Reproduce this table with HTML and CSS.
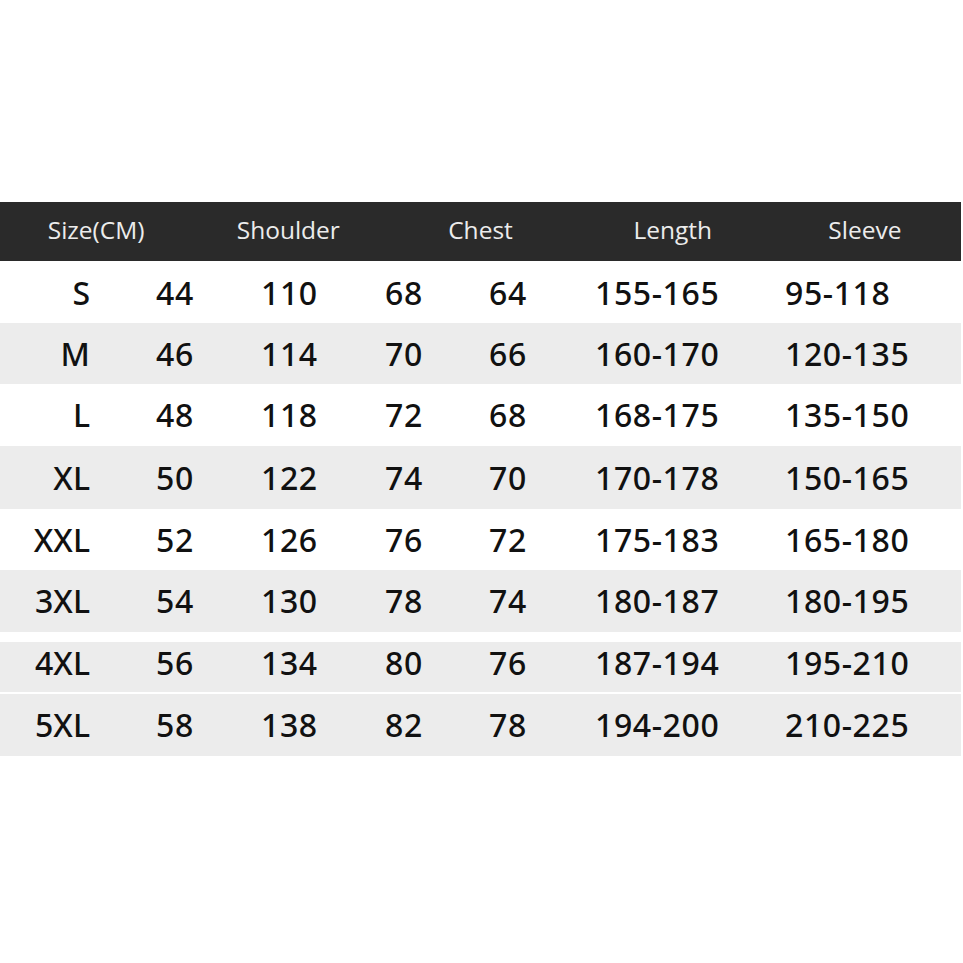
FILE: index.html
```html
<!DOCTYPE html>
<html>
<head>
<meta charset="utf-8">
<link rel="stylesheet" href="styles.css">
</head>
<body>
<div class="chart">
  <div class="head">
    <div>Size(CM)</div>
    <div>Shoulder</div>
    <div>Chest</div>
    <div>Length</div>
    <div>Sleeve</div>
  </div>
  <div class="row r1"><span class="sz">S</span><span>44</span><span>110</span><span>68</span><span>64</span><span>155-165</span><span>95-118</span></div>
  <div class="row r2 grey"><span class="sz">M</span><span>46</span><span>114</span><span>70</span><span>66</span><span>160-170</span><span>120-135</span></div>
  <div class="row r3"><span class="sz">L</span><span>48</span><span>118</span><span>72</span><span>68</span><span>168-175</span><span>135-150</span></div>
  <div class="row r4 grey"><span class="sz">XL</span><span>50</span><span>122</span><span>74</span><span>70</span><span>170-178</span><span>150-165</span></div>
  <div class="row r5"><span class="sz">XXL</span><span>52</span><span>126</span><span>76</span><span>72</span><span>175-183</span><span>165-180</span></div>
  <div class="row r6 grey"><span class="sz">3XL</span><span>54</span><span>130</span><span>78</span><span>74</span><span>180-187</span><span>180-195</span></div>
  <div class="row r7 split"><span class="sz">4XL</span><span>56</span><span>134</span><span>80</span><span>76</span><span>187-194</span><span>195-210</span></div>
  <div class="row r8 grey"><span class="sz">5XL</span><span>58</span><span>138</span><span>82</span><span>78</span><span>194-200</span><span>210-225</span></div>
</div>
</body>
</html>
```

FILE: styles.css
```css
html, body {
  margin: 0;
  padding: 0;
  background: #ffffff;
}

.chart {
  width: 961px;
  padding-top: 202px;
}

.head {
  display: grid;
  grid-template-columns: repeat(5, 1fr);
  height: 59px;
  align-items: center;
  background: #2a2a2a;
  color: #ececec;
  font-family: "Open Sans", "Noto Sans", sans-serif;
  font-size: 24.5px;
  font-weight: 500;
  text-align: center;
  margin-bottom: 1px;
}

.head div {
  line-height: 1;
  padding-bottom: 2px;
}

.row {
  display: grid;
  grid-template-columns: 156px 105px 124px 104px 106px 190px 1fr;
  align-items: center;
  height: 62px;
  font-family: "Noto Sans", "Open Sans", sans-serif;
  font-size: 32px;
  font-weight: 500;
  letter-spacing: 0.6px;
  color: #111111;
  background: #ffffff;
  box-sizing: border-box;
}

.row span {
  line-height: 1;
}

.row .sz {
  text-align: right;
  padding-right: 66px;
  letter-spacing: 0;
}

.grey {
  background: #ececec;
}

.r1 { height: 61px; }
.r2 { height: 61px; }
.r3 { height: 62px; }
.r4 { height: 63px; }
.r5 { height: 61px; }
.r6 { height: 62px; }

.split {
  height: 62px;
  background: linear-gradient(#ffffff 0 10px, #ececec 10px 60px, #ffffff 60px);
}

.r8 {
  height: 62px;
}
```
